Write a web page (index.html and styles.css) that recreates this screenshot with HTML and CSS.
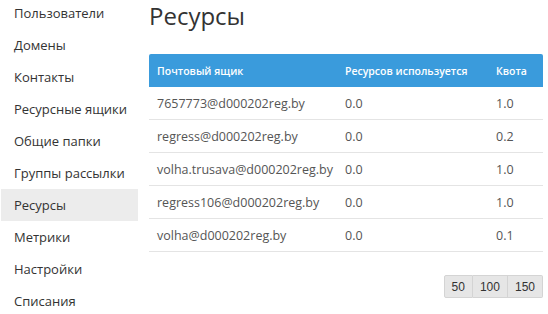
FILE: index.html
```html
<!DOCTYPE html>
<html lang="ru">
  <head>
    <meta charset="UTF-8" />
    <title>Ресурсы</title>
    <link rel="stylesheet" href="styles.css">
  </head>
  <body>
    <div class="layout">
      <ul class="sidebar">
        <li><a href="#">Пользователи</a></li>
        <li><a href="#">Домены</a></li>
        <li><a href="#">Контакты</a></li>
        <li><a href="#">Ресурсные ящики</a></li>
        <li><a href="#">Общие папки</a></li>
        <li><a href="#">Группы рассылки</a></li>
        <li class="active"><a href="#">Ресурсы</a></li>
        <li><a href="#">Метрики</a></li>
        <li><a href="#">Настройки</a></li>
        <li><a href="#">Списания</a></li>
      </ul>

      <main class="content">
        <h1>Ресурсы</h1>
        <table class="grid">
          <thead>
            <tr>
              <th class="col-mail">Почтовый ящик</th>
              <th class="col-used">Ресурсов используется</th>
              <th class="col-quota">Квота</th>
            </tr>
          </thead>
          <tbody>
            <tr><td>7657773@d000202reg.by</td><td>0.0</td><td>1.0</td></tr>
            <tr><td>regress@d000202reg.by</td><td>0.0</td><td>0.2</td></tr>
            <tr><td>volha.trusava@d000202reg.by</td><td>0.0</td><td>1.0</td></tr>
            <tr><td>regress106@d000202reg.by</td><td>0.0</td><td>1.0</td></tr>
            <tr><td>volha@d000202reg.by</td><td>0.0</td><td>0.1</td></tr>
          </tbody>
        </table>

        <div class="pager">
          <button>50</button>
          <button>100</button>
          <button>150</button>
        </div>
      </main>
    </div>
  </body>
</html>
```

FILE: styles.css
```css
* {
  margin: 0;
  padding: 0;
  box-sizing: border-box;
}

body {
  font-family: "Open Sans", "Liberation Sans", sans-serif;
  font-size: 13px;
  color: #333;
  background: #fff;
  overflow: hidden;
}

.layout {
  display: flex;
  align-items: flex-start;
}

/* Меню слева */
.sidebar {
  list-style: none;
  width: 138px;
  margin-top: -3px;
  padding-left: 1px;
  flex-shrink: 0;
}
.sidebar li a {
  display: block;
  height: 32px;
  line-height: 32px;
  padding-left: 13px;
  color: #333;
  text-decoration: none;
}
.sidebar li.active a {
  background: #ececec;
}

/* Контент */
.content {
  margin-left: 11px;
  width: 394px;
}
.content h1 {
  font-size: 24px;
  font-weight: normal;
  line-height: 32px;
  height: 54px;
  color: #333;
}

/* Таблица */
.grid {
  width: 100%;
  border-collapse: separate;
  border-spacing: 0;
  table-layout: fixed;
  font-size: 12.5px;
}
.grid th {
  background: #3a9bdc;
  color: #fff;
  font-size: 10.5px;
  font-weight: 600;
  text-align: left;
  height: 33px;
  padding: 0 8px;
  white-space: nowrap;
}
.grid th:first-child {
  border-top-left-radius: 2px;
}
.grid th:last-child {
  border-top-right-radius: 2px;
}
.grid td {
  height: 33px;
  padding: 0 8px;
  color: #555;
  border-bottom: 1px solid #e4e4e4;
}
.col-mail { width: 188px; }
.col-used { width: 151px; }

/* Пагинация */
.pager {
  display: flex;
  justify-content: flex-end;
  margin-top: 23px;
}
.pager button {
  font-family: "Liberation Sans", Arial, sans-serif;
  font-size: 12px;
  color: #333;
  background: #e6e6e6;
  border: 1px solid #d4d4d4;
  border-left-width: 0;
  height: 23px;
  padding: 0 7px;
}
.pager button:first-child {
  border-left-width: 1px;
  border-radius: 2px 0 0 2px;
}
.pager button:last-child {
  border-radius: 0 2px 2px 0;
}
```
